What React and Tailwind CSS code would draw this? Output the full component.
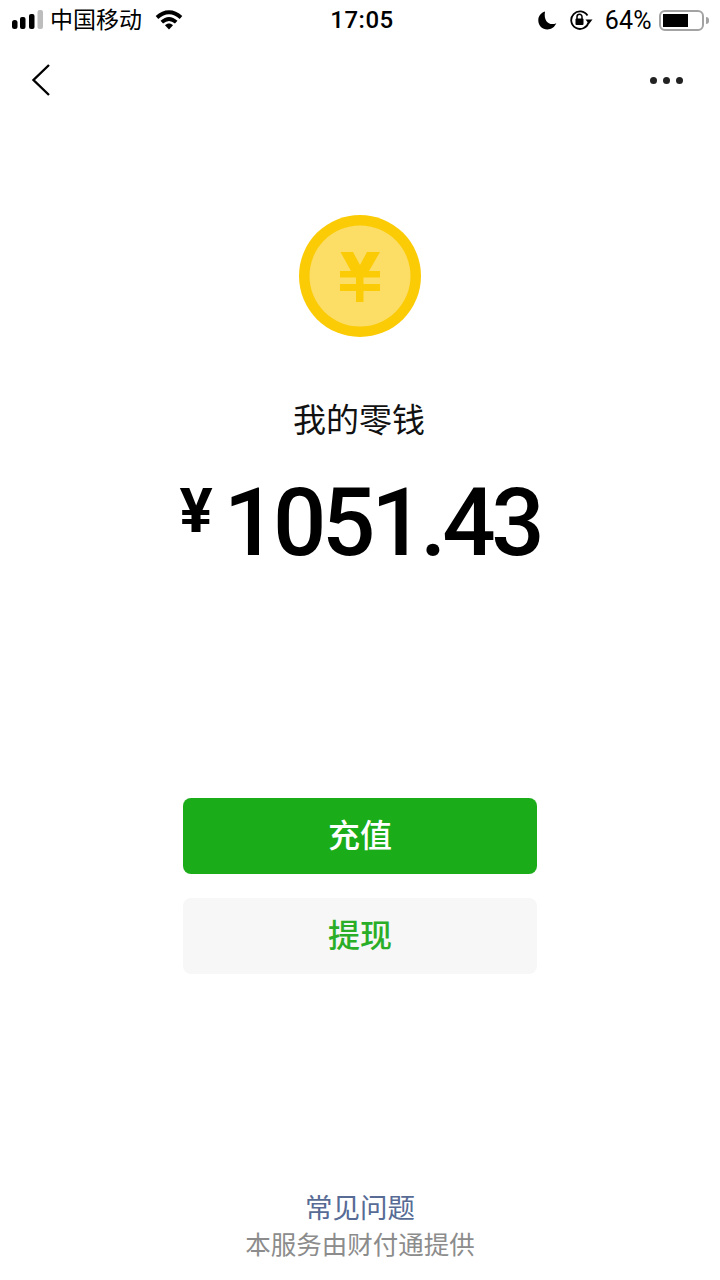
// App.jsx
const cjk = { fontFamily: 'Roboto, "Noto Sans CJK SC", sans-serif' };

const StatusBar = () => (
  <div className="grid h-10 grid-cols-3 items-center pl-3 pr-[11px] text-black">
    <div className="flex items-center">
      <svg width="32" height="20" viewBox="0 0 32 20">
        <rect x="0" y="10" width="5.5" height="9" rx="2.5" fill="#000" />
        <rect x="8" y="7" width="5.5" height="12" rx="2" fill="#000" />
        <rect x="17" y="4" width="5.5" height="15" rx="2" fill="#000" />
        <rect x="25.5" y="0" width="5.5" height="19" rx="2" fill="#bdbdbd" />
      </svg>
      <span className="ml-[6px] text-[23px] leading-none">中国移动</span>
      <svg className="ml-[13px]" width="28" height="20" viewBox="0 0 28 20" fill="none">
        <path d="M2 7.5C9.500 .5 18.500 .5 26 7.500" stroke="#000" strokeWidth="3.800" />
        <path d="M6.800 12.200C11.500 8 16.500 8 21.200 12.200" stroke="#000" strokeWidth="3.800" />
        <path d="M10 15.200C12.500 13 15.500 13 18 15.200L14 19.600Z" fill="#000" />
      </svg>
    </div>
    <div className="pl-[3px] text-center text-[24px] font-medium leading-none tracking-[0.5px]">17:05</div>
    <div className="flex items-center justify-end">
      <svg width="19" height="19" viewBox="0 0 19 19">
        <path d="M7 .5C3 1.800.3 5 .3 9.400c0 5 4 9 9 9 4 0 7.400-2.400 9-6.200-1.300.6-2.500.9-3.900.9-5 0-8.800-4.400-7.400-12.600Z" fill="#000" />
      </svg>
      <svg className="ml-[12px]" width="24" height="21" viewBox="0 0 24 21" fill="none">
        <path d="M19.500 12.500A8.800 8.800 0 1 1 18.500 5.500" stroke="#000" strokeWidth="1.800" />
        <path d="M16.500 9.500h7l-3.500 4.500Z" fill="#000" />
        <rect x="6.500" y="8.500" width="8" height="6.500" rx="1" fill="#000" />
        <path d="M8 9V6.800a2.500 2.500 0 0 1 5 0V9" stroke="#000" strokeWidth="1.500" />
      </svg>
      <span className="ml-[12px] text-[25px] leading-none tracking-[0.3px]">64%</span>
      <div className="ml-[7px] flex h-[21px] w-[45px] items-center rounded-[6px] border-2 border-[#a3a3a3] px-[2px]">
        <div className="h-[13px] w-[25px] bg-black" />
      </div>
      <div className="ml-[2px] h-[7px] w-[3px] rounded-r-full bg-[#a3a3a3]" />
    </div>
  </div>
);

const NavBar = () => (
  <div className="flex h-20 items-center justify-between pl-[31px] pr-[37px]">
    <svg width="20" height="34" viewBox="0 0 20 34" fill="none">
      <path d="M18 2 2.500 17 18 32" stroke="#000" strokeWidth="2.400" />
    </svg>
    <div className="flex gap-[6px]">
      <div className="h-[7px] w-[7px] rounded-full bg-[#222]" />
      <div className="h-[7px] w-[7px] rounded-full bg-[#222]" />
      <div className="h-[7px] w-[7px] rounded-full bg-[#222]" />
    </div>
  </div>
);

const Coin = () => (
  <svg width="122" height="122" viewBox="0 0 122 122">
    <circle cx="61" cy="61" r="61" fill="#fbcb06" />
    <circle cx="61" cy="61" r="50.500" fill="#fcdd66" />
    <path d="M41.500 37H54L61 50L68 37H81L70 56H81V62.500H64.500V69H81V76H64.500V87H57V76H41V69H57V62.500H41V56H52Z" fill="#fbcb06" />
  </svg>
);

export default function App() {
  return (
    <div className="flex min-h-[1280px] w-full flex-col bg-white" style={cjk}>
      <StatusBar />
      <NavBar />

      <div className="mt-[95px] flex flex-col items-center">
        <Coin />
        <div className="mt-[64px] pr-[2px] text-[33px] leading-[40px] text-[#111]">我的零钱</div>
        <div className="mt-[27px] flex items-start text-black">
          <span className="mt-[8px] text-[62px] font-bold leading-[70px]">¥</span>
          <span className="ml-[11px] text-[94px] font-medium leading-[110px] tracking-[-4.3px]">1051.43</span>
        </div>
      </div>

      <div className="mt-[220px] flex flex-col items-center gap-6">
        <button className="h-[76px] w-[354px] rounded-lg bg-[#1aad19] text-[32px] font-medium text-white">充值</button>
        <button className="h-[76px] w-[354px] rounded-lg bg-[#f7f7f7] text-[32px] font-medium text-[#2aae28]">提现</button>
      </div>

      <div className="mt-auto flex flex-col items-center pb-[17px]">
        <div className="text-[27.500px] leading-[36px] text-[#576b95]">常见问题</div>
        <div className="text-[25.500px] leading-[36px] text-[#8c8c8c]">本服务由财付通提供</div>
      </div>
    </div>
  );
}
